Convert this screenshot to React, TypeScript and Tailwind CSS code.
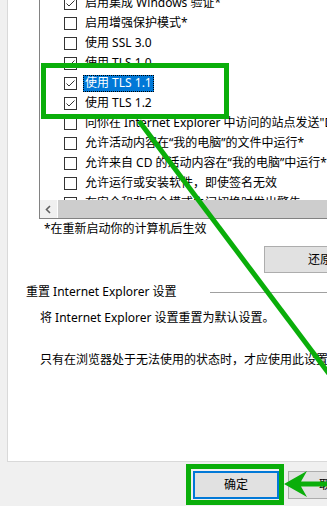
import React from "react";

type Row = { label: string; checked: boolean; selected?: boolean };

const ROWS: Row[] = [
  { label: "启用集成 Windows 验证*", checked: true },
  { label: "启用增强保护模式*", checked: false },
  { label: "使用 SSL 3.0", checked: false },
  { label: "使用 TLS 1.0", checked: true },
  { label: "使用 TLS 1.1", checked: true, selected: true },
  { label: "使用 TLS 1.2", checked: true },
  { label: "向你在 Internet Explorer 中访问的站点发送\"Do Not Track\"请求", checked: false },
  { label: "允许活动内容在“我的电脑”的文件中运行*", checked: false },
  { label: "允许来自 CD 的活动内容在“我的电脑”中运行*", checked: false },
  { label: "允许运行或安装软件，即使签名无效", checked: false },
  { label: "在安全和非安全模式之间切换时发出警告", checked: false },
];

function CheckBox({ checked }: { checked: boolean }) {
  return (
    <span className="flex h-[13px] w-[13px] shrink-0 items-center justify-center border border-[#333333] bg-white">
      {checked ? (
        <svg width="11" height="11" viewBox="0 0 11 11">
          <polyline points="1.5,5.5 4,8 9.5,2.5" fill="none" stroke="#333333" strokeWidth="1" />
        </svg>
      ) : null}
    </span>
  );
}

export default function App() {
  return (
    <div
      className="relative h-[506px] w-[327px] overflow-hidden bg-[#f0f0f0] text-[12px] text-black"
      style={{ fontFamily: '"Segoe UI", "Noto Sans", "Noto Sans CJK SC", sans-serif' }}
    >
      {/* tab page */}
      <div className="ml-[7px] h-[462px] w-[400px] border-b border-l border-[#d9d9d9] bg-white">
        {/* settings list */}
        <div className="ml-[31px] flex h-[219px] w-[400px] flex-col border-b border-l border-[#828282]">
          <div className="h-[200px] overflow-hidden">
            <div className="-mt-[7px]">
              {ROWS.map((r) => (
                <div key={r.label} className="flex h-[20px] items-center whitespace-nowrap pl-[24px]">
                  <CheckBox checked={r.checked} />
                  {r.selected ? (
                    <span className="ml-[6px] flex h-[17px] items-center border border-dotted border-black bg-[#0078d7] px-[1px] text-white">
                      {r.label}
                    </span>
                  ) : (
                    <span className="ml-[8px]">{r.label}</span>
                  )}
                </div>
              ))}
            </div>
          </div>
          <div className="flex h-[18px]">
            <div className="flex w-[17px] items-center justify-center bg-[#f0f0f0]">
              <svg width="7" height="9" viewBox="0 0 7 9">
                <polyline points="5,1 1.5,4.5 5,8" fill="none" stroke="#606060" strokeWidth="1.6" />
              </svg>
            </div>
            <div className="ml-[1px] flex-1 bg-[#cdcdcd]" />
          </div>
        </div>

        <div className="mt-[2px] whitespace-nowrap pl-[36px] leading-[16px]">*在重新启动你的计算机后生效</div>

        <div className="ml-[256px] mt-[9px] flex h-[27px] w-[180px] items-center border border-[#adadad] bg-[#e1e1e1] pl-[43px] whitespace-nowrap">
          还原高级设置(R)
        </div>

        {/* reset group */}
        <div className="mt-[11px] flex items-center">
          <span className="ml-[18px] whitespace-nowrap leading-[16px]">重置 Internet Explorer 设置</span>
          <span className="ml-[33px] h-px flex-1 bg-[#a0a0a0]" />
        </div>
        <div className="mt-[10px] whitespace-nowrap pl-[32px] leading-[16px]">将 Internet Explorer 设置重置为默认设置。</div>
        <div className="mt-[26px] whitespace-nowrap pl-[32px] leading-[16px]">
          只有在浏览器处于无法使用的状态时，才应使用此设置。
        </div>
      </div>

      {/* dialog buttons */}
      <div className="mt-[9px] flex w-[500px] whitespace-nowrap">
        <div className="ml-[193px] flex h-[28px] w-[86px] shrink-0 items-center justify-center border-2 border-[#0078d7] bg-[#e1e1e1]">
          确定
        </div>
        <div className="ml-[9px] flex h-[28px] w-[86px] shrink-0 items-center justify-center border border-[#adadad] bg-[#e1e1e1]">
          取消
        </div>
      </div>

      {/* annotations */}
      <div className="absolute left-[41px] top-[63px] h-[56px] w-[188px] border-[5px] border-[#0aae0a]" />
      <div className="absolute left-[186px] top-[464px] h-[41px] w-[98px] border-[5px] border-[#0aae0a]" />
      <svg className="absolute left-0 top-0" width="327" height="506" viewBox="0 0 327 506">
        <line x1="139" y1="121" x2="360" y2="415" stroke="#0aae0a" strokeWidth="5" />
        <path d="M284 484 L307 471 L301 481.5 L327 481.5 L327 486.5 L301 486.5 L307 497 Z" fill="#0aae0a" />
      </svg>
    </div>
  );
}
